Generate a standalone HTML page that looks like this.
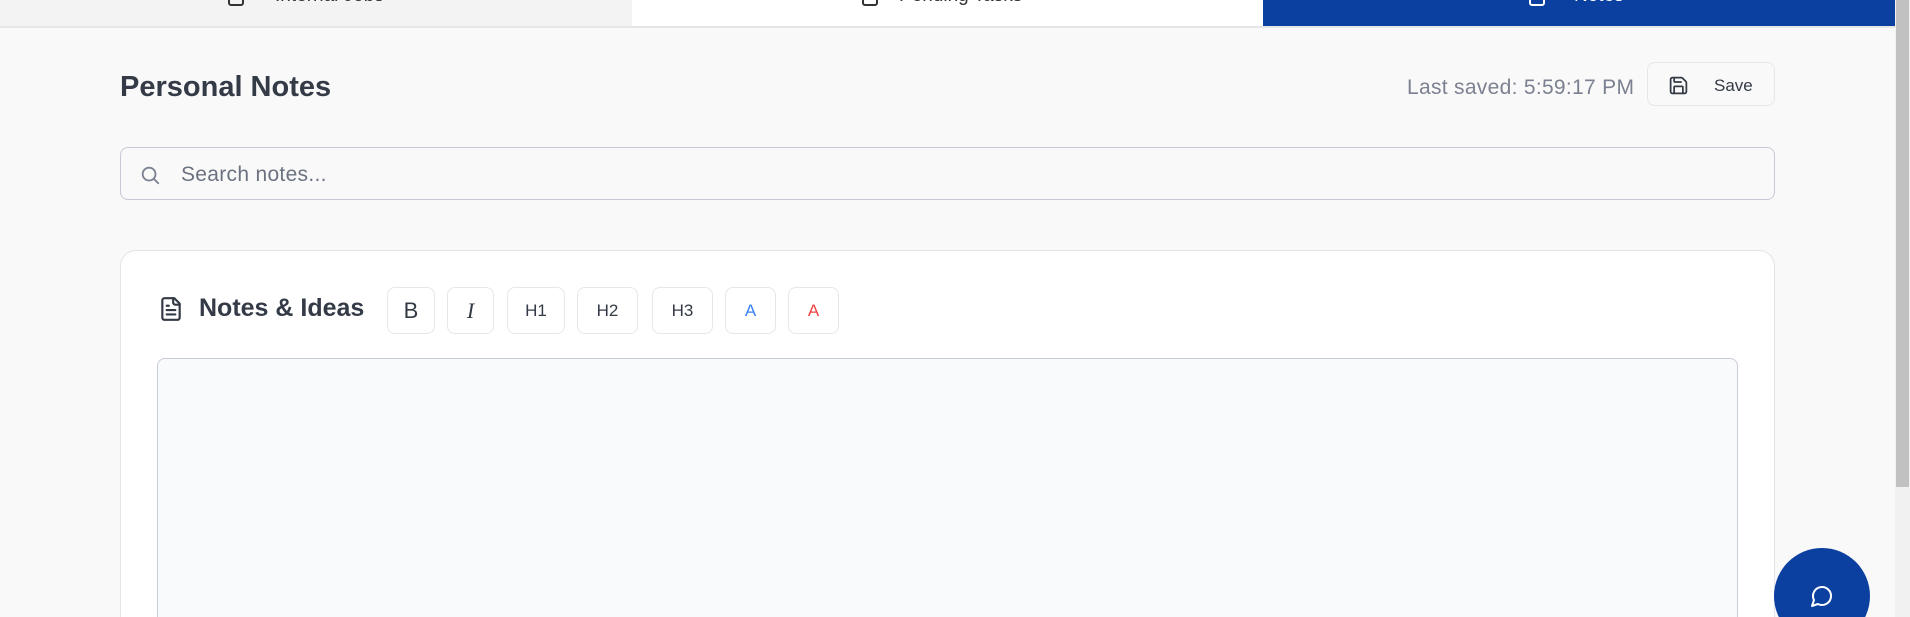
<!DOCTYPE html>
<html style="height:617px;overflow:hidden"><head><meta charset="utf-8"><style>
*{box-sizing:border-box;margin:0;padding:0}
html,body{width:1910px;height:617px;overflow:hidden}
body{background:#f9f9f9;font-family:"Liberation Sans",sans-serif;position:relative;color:#333a45}
.tab{position:absolute;top:0;height:26px;overflow:hidden}
.tab span{position:absolute;top:-15px;font-size:19px;white-space:nowrap}
.ico{position:absolute;top:-10px;width:16px;height:16px;border:2px solid currentColor;border-radius:3px}
.btn{position:absolute;top:287px;height:47px;border:1px solid #e5e7eb;border-radius:8px;background:#fff;display:flex;align-items:center;justify-content:center;font-size:17px;color:#333a45}
</style></head><body>
<div class="tab" style="left:0;width:632px;background:#f3f3f3;color:#333"><div class="ico" style="left:228px"></div><span style="left:275px">Internal Jobs</span></div>
<div class="tab" style="left:632px;width:631px;background:#fff;color:#333"><div class="ico" style="left:230px"></div><span style="left:267px">Pending Tasks</span></div>
<div class="tab" style="left:1263px;width:632px;background:#0b40a0;color:#fff"><div class="ico" style="left:266px"></div><span style="left:311px">Notes</span></div>
<div style="position:absolute;left:0;top:26px;width:1895px;height:2px;background:#e6e6e6"></div>
<div style="position:absolute;left:1895px;top:0;width:15px;height:617px;background:#f1f1f1"></div>
<div style="position:absolute;left:1896px;top:0;width:13px;height:487px;background:#c1c1c1"></div>

<div style="position:absolute;left:120px;top:71px;font-size:29px;font-weight:bold;color:#343b47">Personal Notes</div>
<div style="position:absolute;left:1407px;top:76px;font-size:21px;color:#7b8190;letter-spacing:0.3px">Last saved: 5:59:17 PM</div>
<div style="position:absolute;left:1647px;top:62px;width:128px;height:44px;border:1px solid #e5e7eb;border-radius:8px;background:#f9f9f9">
<svg style="position:absolute;left:20px;top:12px" width="21" height="21" viewBox="0 0 24 24" fill="none" stroke="#333a45" stroke-width="2" stroke-linecap="round" stroke-linejoin="round"><path d="M15.2 3a2 2 0 0 1 1.4.6l3.8 3.8a2 2 0 0 1 .6 1.4V19a2 2 0 0 1-2 2H5a2 2 0 0 1-2-2V5a2 2 0 0 1 2-2z"/><path d="M17 21v-7a1 1 0 0 0-1-1H8a1 1 0 0 0-1 1v7"/><path d="M7 3v4a1 1 0 0 0 1 1h7"/></svg>
<span style="position:absolute;left:66px;top:13px;font-size:17px;color:#333a45">Save</span></div>

<div style="position:absolute;left:120px;top:147px;width:1655px;height:53px;border:1px solid #c6cad6;border-radius:8px;background:#f9f9f9">
<svg style="position:absolute;left:18px;top:16px" width="22" height="22" viewBox="0 0 24 24" fill="none" stroke="#7b8190" stroke-width="2" stroke-linecap="round"><circle cx="11" cy="11" r="7"/><path d="M21 21l-4.3-4.3"/></svg>
<span style="position:absolute;left:60px;top:15px;font-size:21px;color:#6b7280;letter-spacing:0.3px">Search notes...</span></div>

<div style="position:absolute;left:120px;top:250px;width:1655px;height:367px;border:1px solid #e2e4ea;border-bottom:none;border-radius:16px 16px 0 0;background:#fff"></div>
<svg style="position:absolute;left:158px;top:296px" width="26" height="26" viewBox="0 0 24 24" fill="none" stroke="#333a45" stroke-width="2" stroke-linecap="round" stroke-linejoin="round"><path d="M15 2H6a2 2 0 0 0-2 2v16a2 2 0 0 0 2 2h12a2 2 0 0 0 2-2V7z"/><path d="M14 2v4a2 2 0 0 0 2 2h4"/><path d="M10 9H8M16 13H8M16 17H8"/></svg>
<div style="position:absolute;left:199px;top:294px;font-size:25px;font-weight:bold;color:#343b47">Notes &amp; Ideas</div>
<div class="btn" style="left:387px;width:48px;font-size:22px">B</div>
<div class="btn" style="left:447px;width:47px;font-size:22px;font-style:italic;font-family:'Liberation Serif',serif">I</div>
<div class="btn" style="left:507px;width:58px">H1</div>
<div class="btn" style="left:577px;width:61px">H2</div>
<div class="btn" style="left:652px;width:61px">H3</div>
<div class="btn" style="left:725px;width:51px;color:#3b82f6">A</div>
<div class="btn" style="left:788px;width:51px;color:#ef4444">A</div>
<div style="position:absolute;left:157px;top:358px;width:1581px;height:259px;border:1px solid #c8ccd8;border-bottom:none;border-radius:8px 8px 0 0;background:#f9fafb"></div>

<svg style="position:absolute;left:1774px;top:548px" width="96" height="69" viewBox="0 0 96 69"><circle cx="48" cy="48" r="48" fill="#0b40a0"/><g transform="translate(36,36)" fill="none" stroke="#fff" stroke-width="2" stroke-linecap="round" stroke-linejoin="round"><path d="M7.9 20A9 9 0 1 0 4 16.1L2 22z"/></g></svg>
</body></html>
